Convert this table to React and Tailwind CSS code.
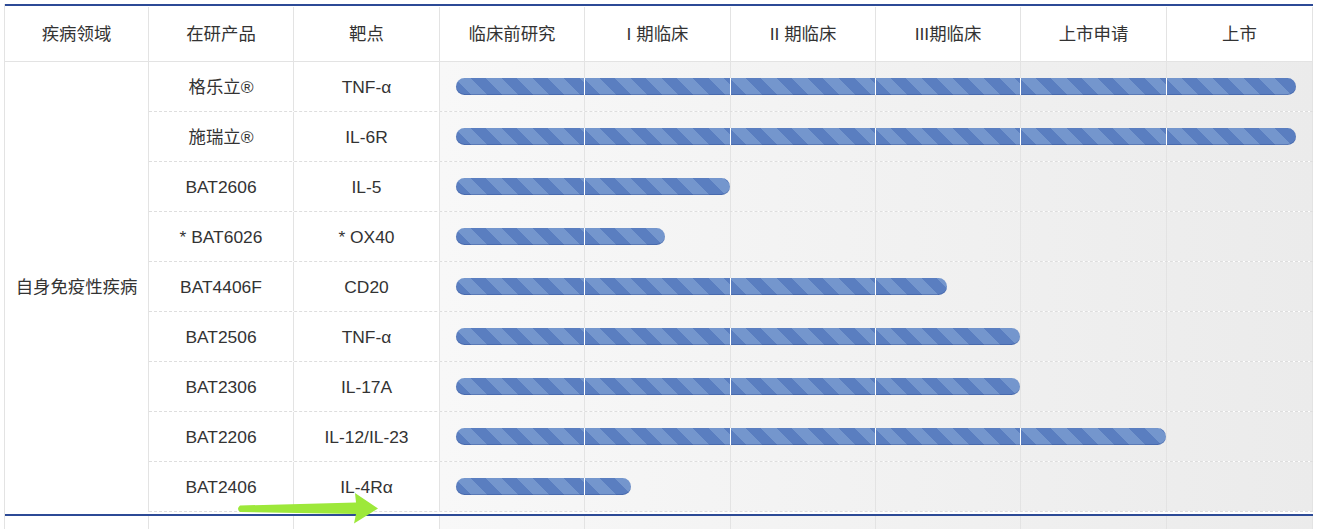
const phases = [
  { label: "临床前研究", w: "w-[145px]" },
  { label: "I 期临床", w: "w-[146px]" },
  { label: "II 期临床", w: "w-[145px]" },
  { label: "III期临床", w: "w-[145px]" },
  { label: "上市申请", w: "w-[146px]" },
  { label: "上市", w: "w-[146px]" },
];

const rows = [
  { product: "格乐立®", target: "TNF-α", end: 6 },
  { product: "施瑞立®", target: "IL-6R", end: 6 },
  { product: "BAT2606", target: "IL-5", end: 2 },
  { product: "* BAT6026", target: "* OX40", end: 1.55 },
  { product: "BAT4406F", target: "CD20", end: 3.49 },
  { product: "BAT2506", target: "TNF-α", end: 4 },
  { product: "BAT2306", target: "IL-17A", end: 4 },
  { product: "BAT2206", target: "IL-12/IL-23", end: 5 },
  { product: "BAT2406", target: "IL-4Rα", end: 1.32 },
];

const font = { fontFamily: "'Liberation Sans', Arial, 'Noto Sans CJK SC', sans-serif" };

export default function App() {
  return (
    <div className="relative h-[529px] overflow-hidden bg-white text-[17.4px] text-[#333]" style={font}>
      <div className="ml-[4px] mt-[4px] w-[1309px] border-l border-[#e3e3e3]">
        {/* ── Header ── */}
        <div className="flex h-[58px] border-t-2 border-b border-t-[#2c4a96] border-b-[#e3e3e3] pt-px">
          <HeadCell w="w-[144px]">疾病领域</HeadCell>
          <HeadCell w="w-[145px]">在研产品</HeadCell>
          <HeadCell w="w-[146px]">靶点</HeadCell>
          {phases.map((p) => (
            <HeadCell key={p.label} w={p.w}>
              {p.label}
            </HeadCell>
          ))}
        </div>

        {/* ── Group ── */}
        <div className="flex">
          <div className="flex w-[144px] items-center justify-center border-r border-[#e3e3e3] pt-px">
            自身免疫性疾病
          </div>
          <div>
            {rows.map((r) => (
              <Row key={r.product} {...r} />
            ))}
          </div>
        </div>

        {/* ── Next group (cut off) ── */}
        <div className="mt-[2px] flex border-t-2 border-[#2c4a96]">
          <div className="h-[60px] w-[144px] border-r border-[#e3e3e3]" />
          <div className="w-[145px] border-r border-[#e3e3e3]" />
          <div className="w-[146px] border-r border-[#e3e3e3]" />
          <div className="flex bg-[linear-gradient(to_right,#f8f8f8,#ebebeb)]">
            {phases.map((p) => (
              <div key={p.label} className={`${p.w} border-r border-[#e3e3e3]`} />
            ))}
          </div>
        </div>
      </div>

      {/* highlighter arrow */}
      <svg className="absolute left-0 top-0" width="1319" height="529">
        <path
          d="M240 505.5 L356 502.5 L355 493 L378 508.5 L354 523.5 L356 514 L240 512 Q236 508.75 240 505.5 Z"
          fill="#9de83a"
        />
      </svg>
    </div>
  );
}

function HeadCell({ w, children }) {
  return (
    <div className={`${w} flex items-center justify-center border-r border-[#e3e3e3]`}>
      {children}
    </div>
  );
}

function Row({ product, target, end }) {
  return (
    <div className="flex h-[50px] border-b border-dashed border-[#dedede]">
      <div className="flex w-[145px] items-center justify-center border-r border-[#e3e3e3] pt-px">
        {product}
      </div>
      <div className="flex w-[146px] items-center justify-center border-r border-[#e3e3e3] pt-px">
        {target}
      </div>
      <div className="flex bg-[linear-gradient(to_right,#f8f8f8,#ebebeb)]">
        {phases.map((p, i) => {
          const frac = Math.min(end, i + 1) - i;
          const show = frac > 0;
          const last = end <= i + 1;
          return (
            <div
              key={p.label}
              className={`${p.w} flex items-center border-r border-[#e3e3e3] ${i === 0 ? "pl-4" : ""} ${i === 5 ? "pr-4" : ""}`}
            >
              {show && (
                <div
                  className={`h-[17px] bg-[repeating-linear-gradient(45deg,#5a7ec0_0px,#5a7ec0_11px,#7496cd_11px,#7496cd_22px)] shadow-[inset_0_-1px_0_rgba(40,70,140,0.35)] ${i === 0 ? "rounded-l-full" : "relative -ml-px border-l border-white"} ${last ? "rounded-r-full" : ""}`}
                  style={{ width: `calc(${frac * 100}% + ${i === 0 ? 0 : 1}px)` }}
                />
              )}
            </div>
          );
        })}
      </div>
    </div>
  );
}
